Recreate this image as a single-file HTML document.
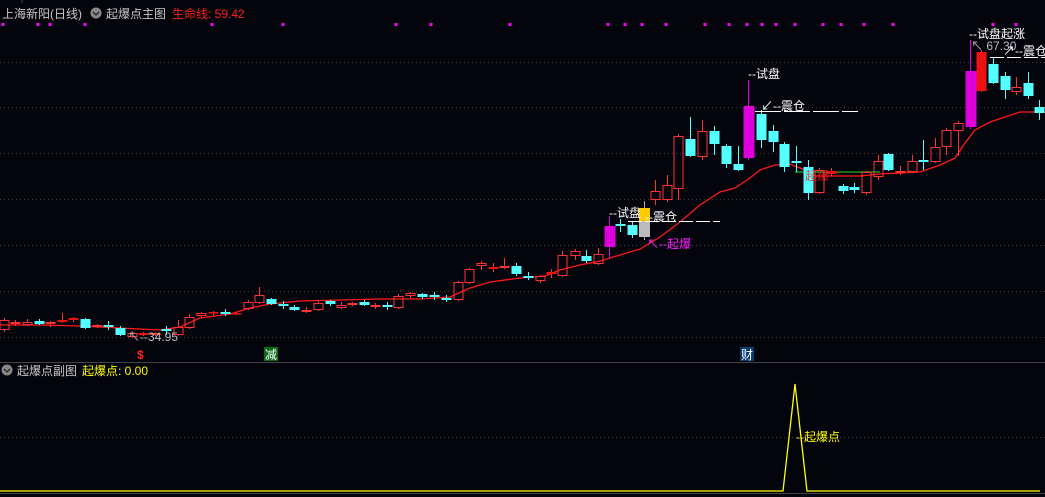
<!DOCTYPE html>
<html><head><meta charset="utf-8"><style>
html,body{margin:0;padding:0;background:#04040c;width:1045px;height:497px;overflow:hidden}
svg{display:block;font-family:"Liberation Sans","Noto Sans CJK SC",sans-serif}
</style></head><body>
<svg id="s" width="1045" height="497" viewBox="0 0 1045 497" xmlns="http://www.w3.org/2000/svg">
<rect width="1045" height="497" fill="#04040c"/>
<g stroke="#3a3a3a" stroke-dasharray="1,3" stroke-width="1">
<line x1="0" y1="62.5" x2="1045" y2="62.5"/><line x1="0" y1="107.5" x2="1045" y2="107.5"/>
<line x1="0" y1="153.5" x2="1045" y2="153.5"/><line x1="0" y1="199.5" x2="1045" y2="199.5"/>
<line x1="0" y1="245.5" x2="1045" y2="245.5"/><line x1="0" y1="291.5" x2="1045" y2="291.5"/>
<line x1="0" y1="337.5" x2="1045" y2="337.5"/><line x1="0" y1="437.5" x2="1045" y2="437.5"/>
</g>
<line x1="0" y1="362.5" x2="1045" y2="362.5" stroke="#444"/>
<line x1="0" y1="493.5" x2="1045" y2="493.5" stroke="#444"/>
<line x1="22" y1="0" x2="22" y2="3" stroke="#444"/>
<g id="dots" fill="#ff00ff"></g>
<polyline fill="none" stroke="#ff1a1a" stroke-width="1.3" points="0,325 40,325 80,326 120,328 160,330 180,327 200,318 230,314 250,308 270,304 300,301 340,300 380,299 420,299 450,297 470,288 490,282 520,278 545,276 560,270 580,265 600,261 620,255 640,249 660,237 680,222 700,205 720,192 735,188 750,178 760,170 775,165 790,164 805,170 815,176 840,176 860,176 880,174 900,173 920,172 940,165 955,158 965,143 975,130 990,122 1005,117 1020,112 1045,112"/>
<line x1="795" y1="172" x2="880" y2="172" stroke="#22dd22"/>
<g id="c"></g>
<g font-size="12">
<text x="2" y="18" fill="#c8c8c8">上海新阳(日线)</text>
<circle cx="96" cy="13" r="5.5" fill="#888"/><path d="M93,12 L96,15 L99,12" stroke="#222" fill="none" stroke-width="1.3"/>
<text x="106" y="18" fill="#c8c8c8">起爆点主图</text>
<text x="172" y="18" fill="#ff2020">生命线: 59.42</text>
<circle cx="7" cy="370" r="5.5" fill="#888"/><path d="M4,369 L7,372 L10,369" stroke="#222" fill="none" stroke-width="1.3"/>
<text x="17" y="375" fill="#c8c8c8">起爆点副图</text>
<text x="82" y="375" fill="#ffff00">起爆点: 0.00</text>
<text x="609" y="217" fill="#fff">--试盘</text>
<text x="645" y="221" fill="#fff">--震仓</text>
<line x1="628" y1="221.5" x2="720" y2="221.5" stroke="#fff" stroke-dasharray="14,3"/>
<text x="647" y="248" fill="#ff22ff">↖--起爆</text>
<text x="748" y="78" fill="#fff">--试盘</text>
<text x="761" y="110" fill="#fff">↙--震仓</text>
<line x1="755" y1="111.5" x2="858" y2="111.5" stroke="#fff" stroke-dasharray="26,3"/>
<text x="128" y="341" fill="#bbb">↖--34.95</text>
<text x="805" y="180" fill="#ff2020" opacity="0.8">起爆</text>
<text x="969" y="38" fill="#fff">--试盘起涨</text>
<text x="971" y="50" fill="#bbb">↖ 67.30</text>
<text x="1003" y="55" fill="#fff">↗--震仓</text>
<line x1="990" y1="57.5" x2="1045" y2="57.5" stroke="#fff" stroke-dasharray="14,3"/>
<text x="137" y="359" fill="#ff2020" font-weight="bold">$</text>
<rect x="264" y="347" width="14" height="14" fill="#0a6a1a"/><text x="265" y="359" fill="#fff">减</text>
<rect x="740" y="347" width="14" height="14" fill="#0a3a70"/><text x="741" y="359" fill="#fff">财</text>
<text x="796" y="441" fill="#ffff00">--起爆点</text>
</g>
<polyline fill="none" stroke="#ffff00" stroke-width="1.3" points="0,491 783,491 795,384 807,491 1040,491"/>
</svg>
<script>
var NS="http://www.w3.org/2000/svg";
var dx=[3,38,50,85,212,283,396,431,510,608,625,642,666,705,729,747,762,776,795,823,841,864,893,993,1016];
var dg=document.getElementById("dots");
dx.forEach(function(x){var r=document.createElementNS(NS,"rect");r.setAttribute("x",x-1.5);r.setAttribute("y",23);r.setAttribute("width",3);r.setAttribute("height",3);dg.appendChild(r);});
var C=[[4,320,330,318,332,'r'],[15,322,324,320,326,'r'],[27,322,325,319,326,'r'],[39,321,324,319,325,'c'],[50,322,324,321,327,'r'],[62,320,322,313,323,'R'],[73,318,320,317,322,'R'],[85,319,328,318,329,'c'],[97,325,327,324,328,'r'],[108,325,327,321,330,'c'],[120,328,335,326,336,'c'],[132,333,337,331,338,'r'],[143,333,335,332,336,'R'],[155,333,335,332,336,'r'],[166,329,331,326,335,'c'],[178,327,335,320,336,'r'],[189,317,328,314,329,'r'],[201,313,316,312,318,'r'],[213,312,313,311,316,'R'],[225,312,314,309,316,'c'],[236,313,314,312,315,'R'],[248,302,309,300,310,'r'],[259,295,303,287,304,'r'],[271,299,304,298,305,'c'],[283,304,306,301,309,'c'],[294,307,310,305,311,'c'],[306,310,312,307,313,'r'],[318,303,310,300,311,'r'],[330,301,304,300,306,'c'],[341,305,308,302,309,'r'],[352,303,305,302,306,'r'],[364,302,305,300,306,'c'],[375,305,307,303,309,'r'],[387,305,307,302,310,'c'],[398,296,308,294,309,'r'],[410,293,296,292,298,'r'],[422,294,297,293,299,'c'],[434,295,297,292,300,'c'],[446,298,300,295,302,'c'],[458,282,300,281,301,'r'],[469,269,283,268,284,'r'],[481,263,266,261,270,'r'],[493,267,269,263,272,'R'],[504,266,268,258,269,'r'],[516,266,274,263,276,'c'],[528,276,278,272,280,'c'],[540,276,281,275,283,'r'],[551,272,274,269,278,'R'],[562,255,276,251,277,'r'],[575,251,256,249,260,'r'],[586,256,261,250,263,'c'],[598,254,264,248,265,'r'],[609,226,247,216,258,'m'],[620,224,226,219,232,'c'],[632,225,235,222,238,'c'],[644,208,237,201,240,'g'],[655,191,200,180,205,'r'],[667,185,200,175,202,'r'],[678,136,189,134,200,'r'],[690,139,156,117,157,'c'],[702,131,157,120,160,'r'],[714,131,144,126,155,'c'],[726,146,164,144,168,'c'],[738,164,170,146,171,'c'],[748,106,158,80,160,'m'],[761,114,140,110,148,'c'],[773,131,142,125,152,'c'],[784,144,167,142,172,'c'],[796,161,163,146,172,'c'],[808,167,193,160,200,'c'],[819,170,193,168,194,'r'],[831,171,174,168,176,'R'],[843,186,191,184,194,'c'],[854,187,190,183,193,'c'],[866,172,193,171,195,'r'],[878,161,177,155,180,'r'],[888,154,170,153,171,'c'],[900,171,173,166,175,'r'],[912,161,172,155,173,'r'],[923,160,162,140,170,'c'],[935,147,162,138,163,'r'],[946,130,147,128,155,'r'],[958,123,131,121,156,'r'],[970,71,127,40,129,'m'],[981,52,91,50,92,'R'],[993,64,83,58,84,'c'],[1005,76,90,72,99,'c'],[1016,87,92,77,95,'r'],[1028,83,96,72,99,'c'],[1039,107,113,100,120,'c']];
var g=document.getElementById("c");
function el(n,a){var e=document.createElementNS(NS,n);for(var k in a)e.setAttribute(k,a[k]);g.appendChild(e);return e;}
C.forEach(function(c){var x=c[0],t=c[1],b=c[2],h=c[3],l=c[4],k=c[5];
var col={r:'#ff3333',R:'#ff3333',c:'#55ffff',m:'#dd00dd',g:'#aaaaaa'}[k];
if(k=='r'){el('line',{x1:x+.5,y1:h,x2:x+.5,y2:t,stroke:col});el('line',{x1:x+.5,y1:b,x2:x+.5,y2:l,stroke:col});
 el('rect',{x:x-4,y:t+.5,width:9,height:Math.max(b-t-1,1),fill:'none',stroke:col});}
else{el('line',{x1:x+.5,y1:h,x2:x+.5,y2:l,stroke:col});
 if(k=='g'){el('rect',{x:x-5,y:t,width:11,height:13,fill:'#ffcc00'});el('rect',{x:x-5,y:t+13,width:11,height:b-t-13,fill:'#bbbbbb'});}
 else el('rect',{x:x-4.5,y:t,width:k=='m'?11:10,height:Math.max(b-t,1.5),fill:k=='R'?'#ee1111':col});}
});
</script>
</body></html>
